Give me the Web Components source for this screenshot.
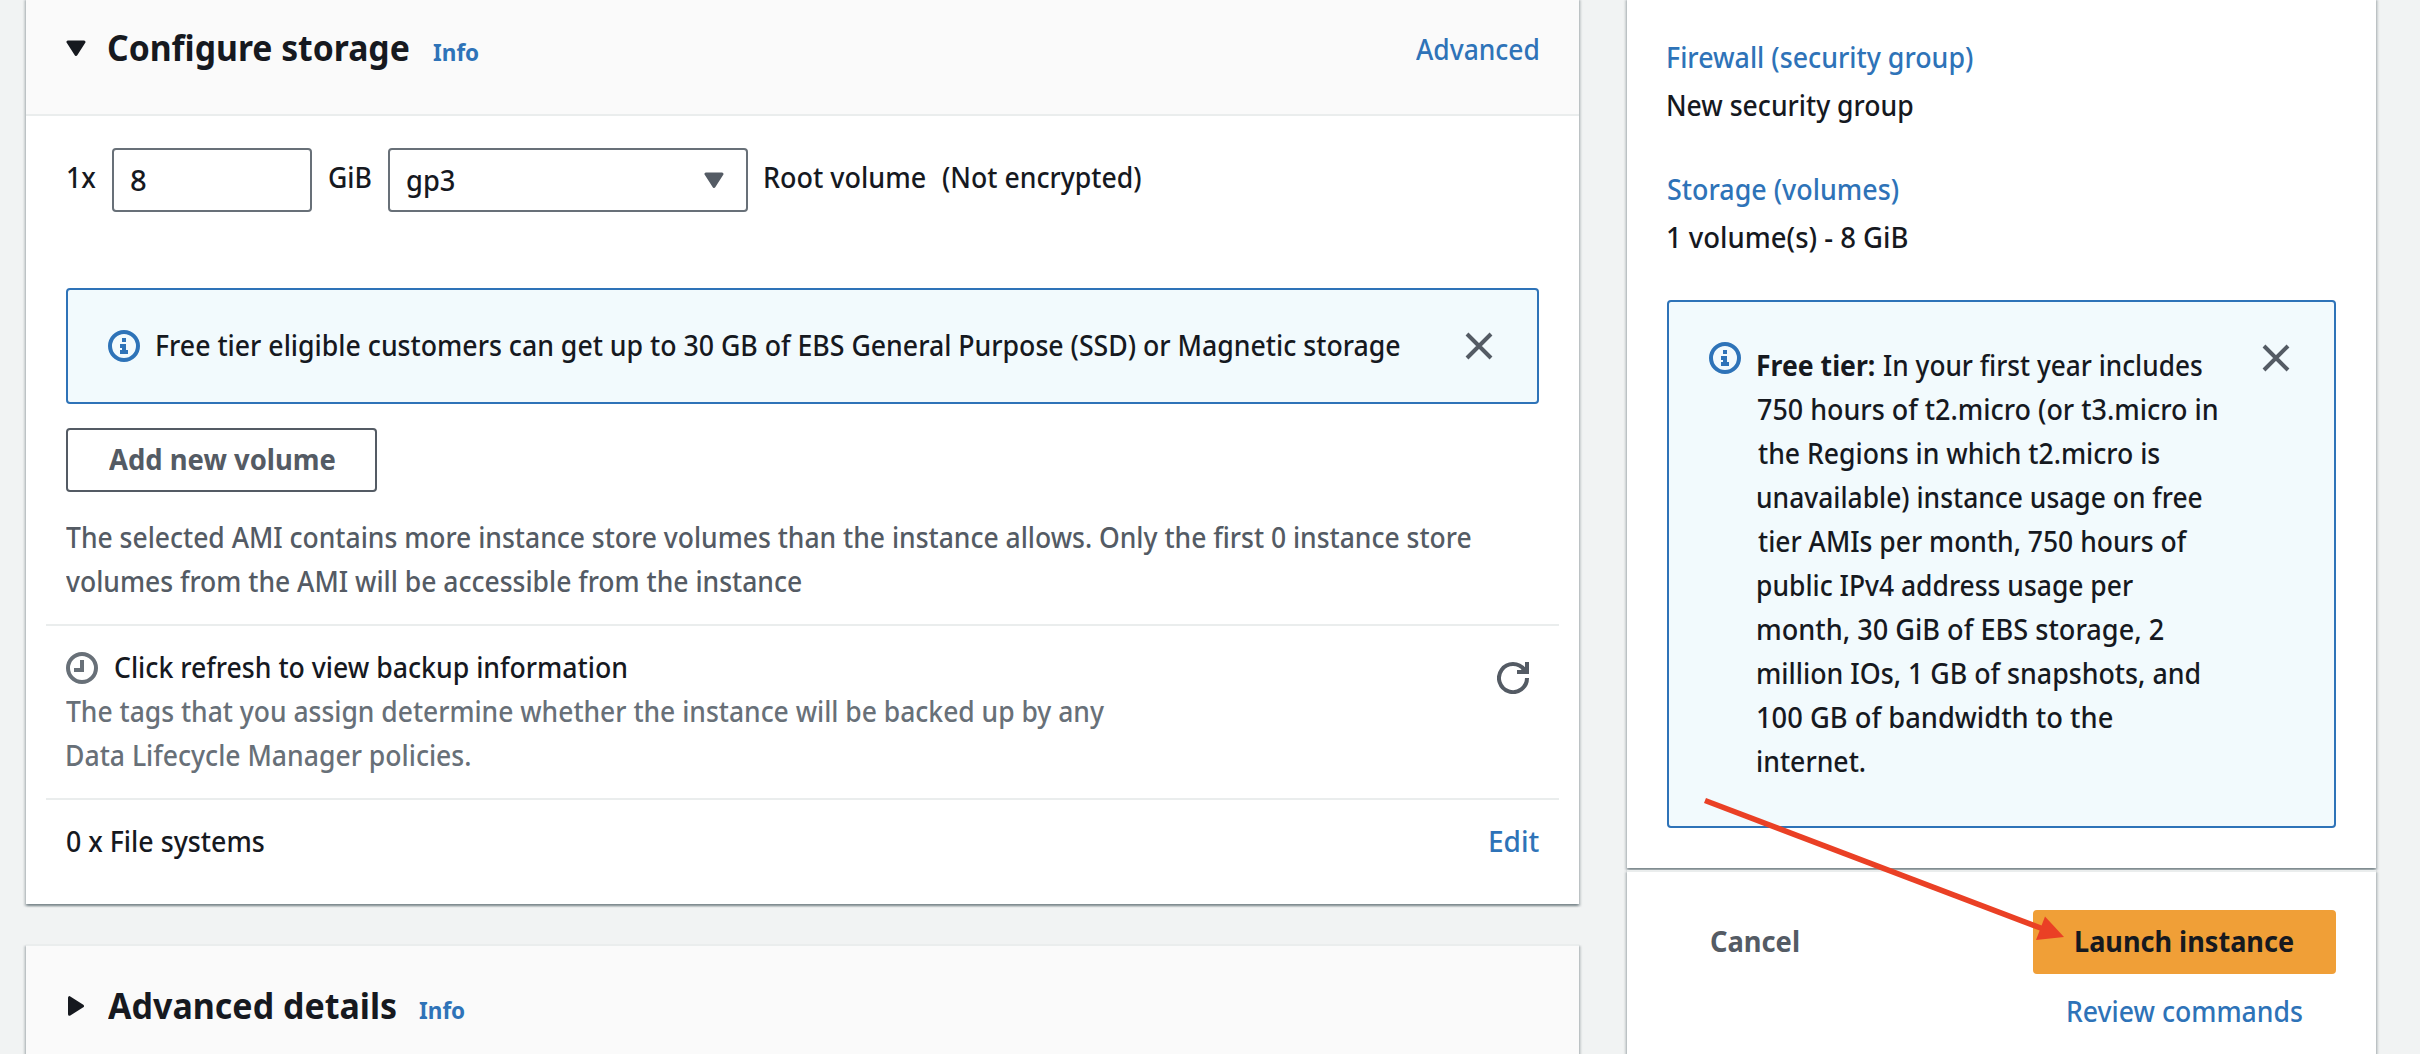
<!DOCTYPE html>
<html lang="en">
<head>
<meta charset="utf-8">
<title>Launch an instance</title>
<style>
html,body{margin:0;height:1054px;overflow:hidden;background:#f1f3f3;font-family:"Noto Sans","Open Sans",sans-serif;color:#16191f;
--link:#2e73b8;--gray:#545b64;--muted:#687078;--line:#eaeded}
</style>
</head>
<body>
<launch-page></launch-page>
<script>
const define=(name,html,after)=>customElements.define(name,class extends HTMLElement{
  connectedCallback(){
    if(this.shadowRoot)return;
    this.attachShadow({mode:'open'}).innerHTML=html;
    if(after)after(this,this.shadowRoot);
  }
});

// Single line of text whose visible glyphs span exactly `w` pixels.
// Measured at ten times the size so that the side bearings are precise.
const ctx=document.createElement('canvas').getContext('2d');
define('fit-text',`<style>
:host{display:inline-block;flex:none;white-space:pre;line-height:44px;font-size:28px;overflow:visible}
:host([link]){color:var(--link)}
span{display:inline-block;transform-origin:0 50%}
</style><span><slot></slot></span>`,(el,root)=>{
  const size=el.getAttribute('size')||28,weight=el.hasAttribute('bold')?700:460;
  el.style.fontSize=size+'px';el.style.fontWeight=weight;
  ctx.font=`${weight} ${size*10}px "Noto Sans","Open Sans",sans-serif`;
  const m=ctx.measureText(el.textContent);
  const left=m.actualBoundingBoxLeft/10,ink=m.actualBoundingBoxRight/10+left;
  const w=+el.getAttribute('w'),k=w/ink;
  el.style.width=w+'px';
  const s=root.querySelector('span');
  s.style.transform=`scaleX(${k})`;
  s.style.marginLeft=left*k+'px';
});

const ICONS={
 down:['0 0 20 16','<path d="M2 2h16L10 14.4z" fill="currentColor" stroke="currentColor" stroke-width="3" stroke-linejoin="round"/>',20,16],
 right:['0 0 16 20','<path d="M1.5 1.7v16.6L14.5 10z" fill="currentColor" stroke="currentColor" stroke-width="3" stroke-linejoin="round"/>',16,20],
 info:['0 0 32 32','<circle cx="16" cy="16" r="14" fill="none" stroke="currentColor" stroke-width="4"/><path d="M14 8h4v4h-4zM12 14h6v6h2v4h-8v-4h2v-2h-2z" fill="currentColor"/>',32,32],
 close:['0 0 28 28','<path d="M2 2l24 24M26 2L2 26" fill="none" stroke="currentColor" stroke-width="4"/>',28,28],
 clock:['0 0 32 32','<circle cx="16" cy="16" r="14" fill="none" stroke="currentColor" stroke-width="4"/><path d="M16 8v10H8" fill="none" stroke="currentColor" stroke-width="4"/>',32,32],
 refresh:['0 0 32 32','<path d="M30 16A14 14 0 1 1 27.3 7.8" fill="none" stroke="currentColor" stroke-width="4"/><path d="M20 10h10V0" fill="none" stroke="currentColor" stroke-width="4"/><path d="M24 7l4 3 2-2V4z" fill="currentColor"/>',32,32]
};
define('ui-icon',`<style>:host{display:block;flex:none}svg{display:block}</style>`,(el,root)=>{
  const [vb,body,w,h]=ICONS[el.getAttribute('name')];
  root.innerHTML+=`<svg width="${w}" height="${h}" viewBox="${vb}">${body}</svg>`;
});

define('ui-card',`<style>
:host{display:block;background:#fff;border-top:2px solid var(--line);box-sizing:border-box;
box-shadow:0 2px 2px 0 rgba(0,28,36,.3),2px 2px 2px 0 rgba(0,28,36,.15),-2px 2px 2px 0 rgba(0,28,36,.15)}
</style><slot></slot>`);

define('card-header',`<style>
:host{display:flex;box-sizing:border-box;background:#fafafa;border-bottom:2px solid var(--line);height:116px;padding:26px 41px 0 40px;align-items:flex-start}
.t{display:flex;align-items:baseline}
.end{margin-left:auto;padding-top:1px}
</style><slot name="icon"></slot><div class="t"><slot></slot></div><div class="end"><slot name="end"></slot></div>`);

define('ui-alert',`<style>
:host{display:flex;box-sizing:border-box;border:2px solid var(--link);border-radius:4px;background:#f2fafd;align-items:flex-start;padding:40px 44px 0 40px}
.i{color:var(--link)}
.x{margin:2px 0 0 auto;color:var(--gray)}
</style><ui-icon class="i" name="info"></ui-icon><slot></slot><ui-icon class="x" name="close"></ui-icon>`);

define('ui-field',`<style>
:host{display:flex;flex:none;box-sizing:border-box;height:64px;border:2px solid var(--muted);border-radius:4px;background:#fff;padding:8px 16px 0 17px;align-items:flex-start;justify-content:space-between}
</style><slot></slot><slot name="icon"></slot>`);

define('ui-button',`<style>
:host{display:flex;flex:none;box-sizing:border-box;height:64px;border:2px solid var(--gray);border-radius:4px;color:var(--gray);justify-content:center;padding-top:7px}
:host([primary]){background:#f09f37;border-color:#f09f37;color:#16191f}
</style><slot></slot>`);

define('storage-card',`<style>
:host{display:block}
ui-card{height:906px;margin-top:-2px}
.row{display:flex;align-items:flex-start}
.size{padding:32px 0 0 42px;height:140px}
.size>fit-text{margin-top:7px}
.alert{margin:0 40px;height:116px}
ui-button{margin:24px 0 0 40px;width:311px}
.desc{display:flex;flex-direction:column;margin:23px 40px 0 40px;color:var(--gray)}
hr{border:0;height:2px;background:var(--line);margin:21px 20px 0}
.backup{padding:19px 50px 0 40px;height:153px}
.col{display:flex;flex-direction:column;color:var(--muted);align-items:flex-start}
.status{display:flex;color:#16191f;padding-top:0}
.status ui-icon{color:var(--muted);margin:7px 17px 0 0}
.fs{padding:19px 40px 0;justify-content:space-between}
</style>
<ui-card>
<card-header><ui-icon slot="icon" name="down" style="margin-top:14px"></ui-icon>
<fit-text bold size="36" w="300" style="margin-left:23px">Configure storage</fit-text><fit-text bold link size="24" w="44.5" style="margin-left:25px">Info</fit-text>
<fit-text slot="end" link w="122">Advanced</fit-text></card-header>
<div class="row size"><fit-text w="27.5">1x</fit-text>
<ui-field style="width:200px;margin-left:16.5px"><fit-text w="14.6">8</fit-text></ui-field>
<fit-text w="41.5" style="margin-left:17.5px">GiB</fit-text>
<ui-field style="width:360px;margin-left:17px;padding-right:22px"><fit-text w="47">gp3</fit-text><ui-icon slot="icon" name="down" style="margin-top:14px;color:var(--gray)"></ui-icon></ui-field>
<fit-text w="160" style="margin-left:17px">Root volume</fit-text><fit-text w="198" style="margin-left:18px">(Not encrypted)</fit-text></div>
<ui-alert class="alert"><fit-text w="1242" style="margin:-7px 0 0 17px">Free tier eligible customers can get up to 30 GB of EBS General Purpose (SSD) or Magnetic storage</fit-text></ui-alert>
<ui-button><fit-text bold w="226">Add new volume</fit-text></ui-button>
<div class="desc"><fit-text w="1404.5">The selected AMI contains more instance store volumes than the instance allows. Only the first 0 instance store</fit-text><fit-text w="735">volumes from the AMI will be accessible from the instance</fit-text></div>
<hr>
<div class="row backup"><div class="col"><div class="status"><ui-icon name="clock"></ui-icon><fit-text w="511">Click refresh to view backup information</fit-text></div><fit-text w="1038" style="margin-left:0px">The tags that you assign determine whether the instance will be backed up by any</fit-text><fit-text w="403" style="margin-left:1px">Data Lifecycle Manager policies.</fit-text></div>
<ui-icon name="refresh" style="margin:17px 0 0 auto;color:var(--gray)"></ui-icon></div>
<hr style="margin-top:0">
<div class="row fs"><fit-text w="197" style="margin-left:1px">0 x File systems</fit-text><fit-text link w="48">Edit</fit-text></div>
</ui-card>`);

define('details-card',`<style>
:host{display:block;margin-top:40px}ui-card{height:200px}card-header{padding:38px 40px 0 42px;height:150px}
</style><ui-card><card-header><ui-icon slot="icon" name="right" style="margin-top:12px"></ui-icon>
<fit-text bold size="36" w="288" style="margin-left:24px">Advanced details</fit-text><fit-text bold link size="24" w="44.5" style="margin-left:24px">Info</fit-text></card-header></ui-card>`);

define('summary-card',`<style>
:host{display:block}
ui-card{height:870px;margin-top:-2px;padding:35px 40px 0;display:flex;flex-direction:column;align-items:flex-start}
.p{display:flex;flex-direction:column;gap:4px;margin:0 0 40px 1px;width:600px}
.p fit-text{display:block}
ui-alert{width:669px;height:528px;margin-top:1px}
.l{display:flex;flex-direction:column;margin:1px 0 0 17px;width:462px}
.l div{display:flex}
</style><ui-card>
<div class="p" style="margin-bottom:40px"><fit-text link w="304">Firewall (security group)</fit-text><fit-text w="244">New security group</fit-text></div>
<div class="p"><fit-text link w="230">Storage (volumes)</fit-text><fit-text w="239">1 volume(s) - 8 GiB</fit-text></div>
<ui-alert><div class="l">
<div><fit-text bold w="116">Free tier:</fit-text><fit-text w="318" style="margin-left:10px">In your first year includes</fit-text></div>
<fit-text w="459">750 hours of t2.micro (or t3.micro in</fit-text>
<fit-text w="401">the Regions in which t2.micro is</fit-text>
<fit-text w="444">unavailable) instance usage on free</fit-text>
<fit-text w="429">tier AMIs per month, 750 hours of</fit-text>
<fit-text w="375">public IPv4 address usage per</fit-text>
<fit-text w="405">month, 30 GiB of EBS storage, 2</fit-text>
<fit-text w="441">million IOs, 1 GB of snapshots, and</fit-text>
<fit-text w="354">100 GB of bandwidth to the</fit-text>
<fit-text w="107">internet.</fit-text>
</div></ui-alert></ui-card>`);

define('action-card',`<style>
:host{display:block;margin-top:2px}
ui-card{height:220px;padding:38px 40px 0}
.r{display:flex;justify-content:space-between;padding-left:44px;color:var(--gray)}
.r>fit-text{margin-top:9px}
.c{display:flex;justify-content:flex-end;padding:15px 34px 0 0}
</style><ui-card><div class="r"><fit-text bold w="87">Cancel</fit-text><ui-button primary style="width:303px"><fit-text bold w="217">Launch instance</fit-text></ui-button></div>
<div class="c"><fit-text link w="234">Review commands</fit-text></div></ui-card>`);

// Arrow annotation drawn over the summary column.
define('arrow-note',`<style>:host{position:absolute;left:1700px;top:790px;pointer-events:none}svg{display:block}</style>
<svg width="370" height="155" viewBox="1700 790 370 155"><path d="M1705 800.5L2042 928.5" stroke="#ea4025" stroke-width="5.6"/><path d="M2064 937L2045 916.5 2036 940z" fill="#ea4025"/></svg>`);

define('launch-page',`<style>
:host{display:flex;gap:48px;padding-left:26px;height:1054px;width:2394px;overflow:hidden;align-items:flex-start;position:relative}
.a{width:1553px}.b{width:749px}
</style><div class="a"><storage-card></storage-card><details-card></details-card></div><div class="b"><summary-card></summary-card><action-card></action-card></div><arrow-note></arrow-note>`);
</script>
</body>
</html>
